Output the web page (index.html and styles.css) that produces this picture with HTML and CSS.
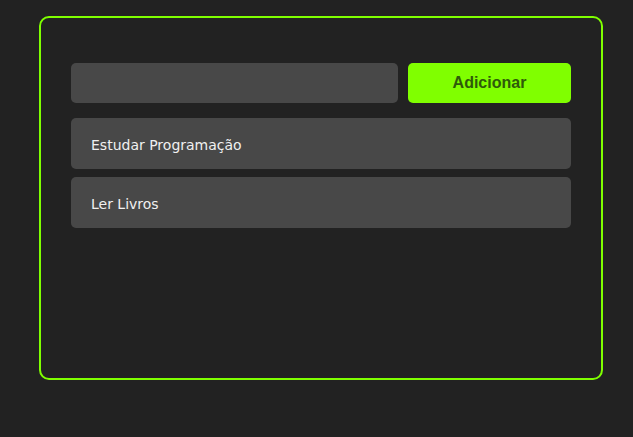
FILE: index.html
```html
<!DOCTYPE html>
<html lang="pt-BR">
<head>
<meta charset="utf-8">
<title>Tarefas</title>
<link rel="stylesheet" href="styles.css">
</head>
<body>
<div class="container">
  <form class="add-form">
    <input class="task-input" type="text">
    <button class="add-btn" type="button">Adicionar</button>
  </form>
  <ul class="task-list">
    <li class="task">Estudar Programação</li>
    <li class="task">Ler Livros</li>
  </ul>
</div>
</body>
</html>
```
FILE: styles.css
```css
html, body {
  margin: 0;
  padding: 0;
  background: #222222;
}
body {
  padding: 16px 30px 0 39px;
  font-family: "DejaVu Sans", sans-serif;
}
.container {
  box-sizing: border-box;
  width: 564px;
  height: 364px;
  border: 2px solid #7fff00;
  border-radius: 10px;
  padding: 45px 30px 30px 30px;
}
.add-form {
  display: flex;
  gap: 10px;
  margin: 0 0 15px 0;
}
.task-input {
  flex: 1;
  height: 40px;
  box-sizing: border-box;
  border: none;
  border-radius: 5px;
  background: #484848;
  outline: none;
}
.add-btn {
  width: 163px;
  height: 40px;
  border: none;
  border-radius: 5px;
  background: #80ff00;
  color: #2e5a0a;
  font-family: "Liberation Sans", Arial, sans-serif;
  font-weight: bold;
  font-size: 16px;
}
.task-list {
  list-style: none;
  margin: 0;
  padding: 0;
  display: flex;
  flex-direction: column;
  gap: 8px;
}
.task {
  height: 51px;
  box-sizing: border-box;
  display: flex;
  align-items: center;
  padding: 2px 0 0 20px;
  background: #484848;
  border-radius: 5px;
  color: #f0f0f0;
  font-size: 14px;
}
```
